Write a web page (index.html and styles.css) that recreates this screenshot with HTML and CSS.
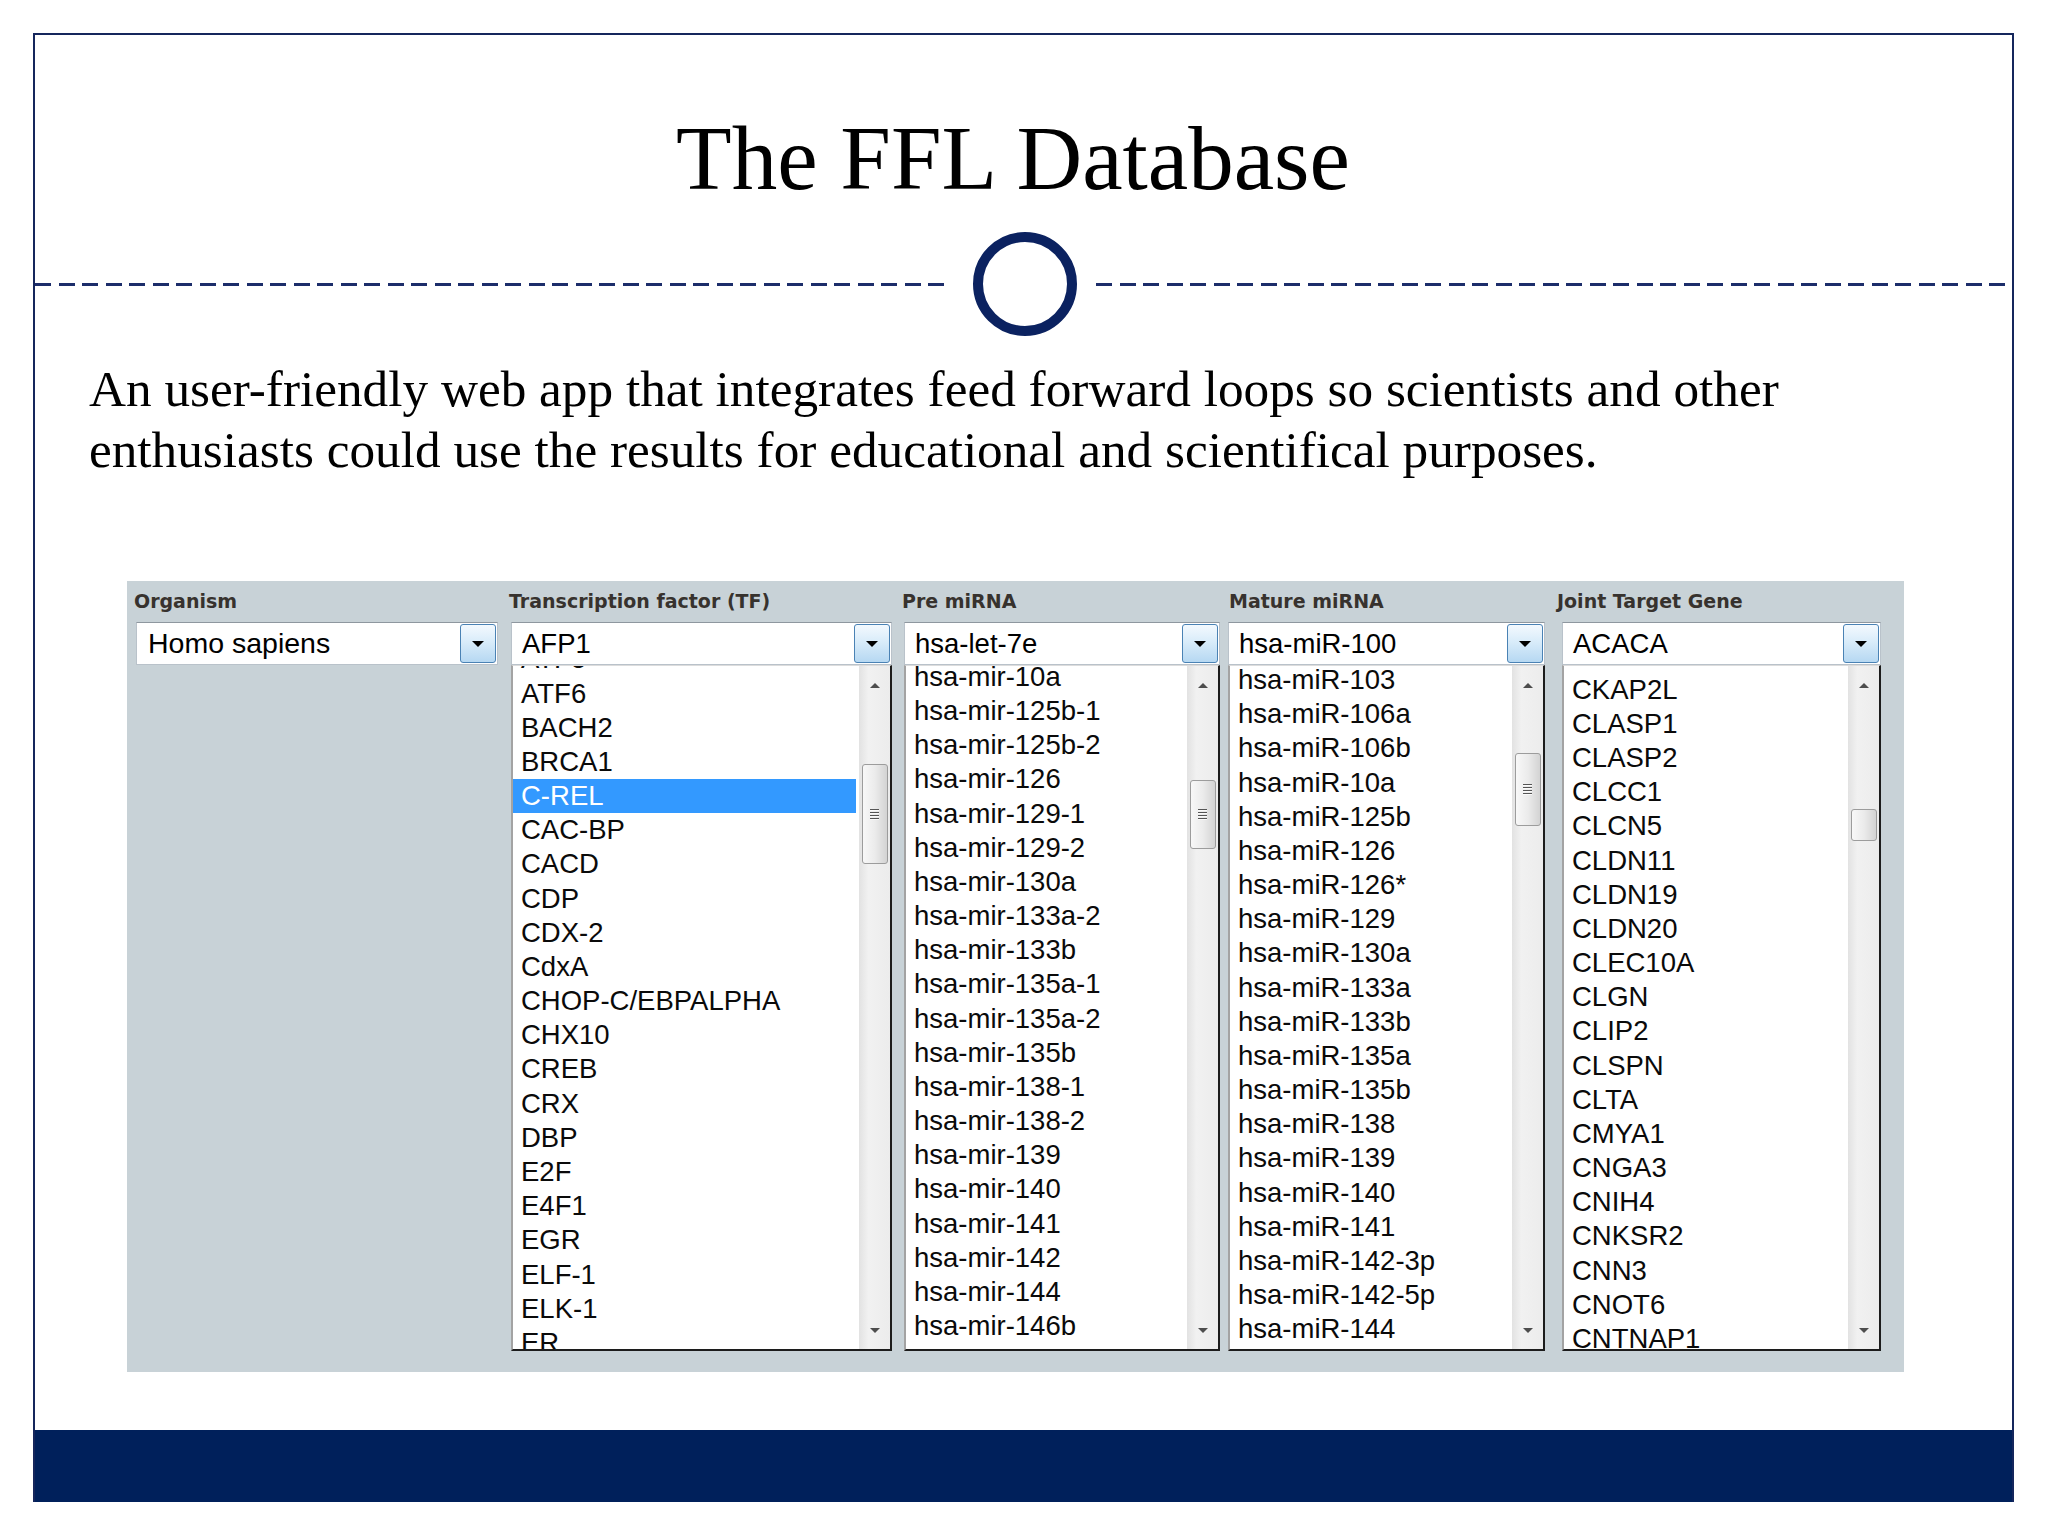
FILE: index.html
```html
<!DOCTYPE html>
<html lang="en">
<head>
<meta charset="utf-8">
<title>The FFL Database</title>
<link rel="stylesheet" href="styles.css">
</head>
<body>
<div class="slide">
  <h1 class="title">The FFL Database</h1>
  <div class="divider">
    <div class="dash left"></div>
    <div class="ring"></div>
    <div class="dash right"></div>
  </div>
  <p class="intro">An user-friendly web app that integrates feed forward loops so scientists and other enthusiasts could use the results for educational and scientifical purposes.</p>

  <div class="panel">
    <div class="field field-org">
      <div class="label">Organism</div>
      <div class="select"><span class="select-value">Homo sapiens</span><span class="drop"></span></div>
    </div>

    <div class="field field-tf">
      <div class="label">Transcription factor (TF)</div>
      <div class="select"><span class="select-value">AFP1</span><span class="drop"></span></div>
      <div class="listbox">
        <div class="items off-tf">
          <ul>
            <li>ATF5</li><li>ATF6</li><li>BACH2</li><li>BRCA1</li><li class="selected">C-REL</li><li>CAC-BP</li><li>CACD</li><li>CDP</li><li>CDX-2</li><li>CdxA</li><li>CHOP-C/EBPALPHA</li><li>CHX10</li><li>CREB</li><li>CRX</li><li>DBP</li><li>E2F</li><li>E4F1</li><li>EGR</li><li>ELF-1</li><li>ELK-1</li><li>ER</li>
          </ul>
        </div>
        <div class="scroll">
          <div class="arrow up"></div>
          <div class="track"><div class="thumb thumb-tf"><span class="grip"></span></div></div>
          <div class="arrow down"></div>
        </div>
      </div>
    </div>

    <div class="field field-pre">
      <div class="label">Pre miRNA</div>
      <div class="select"><span class="select-value">hsa-let-7e</span><span class="drop"></span></div>
      <div class="listbox">
        <div class="items off-pre">
          <ul>
            <li>hsa-mir-10a</li><li>hsa-mir-125b-1</li><li>hsa-mir-125b-2</li><li>hsa-mir-126</li><li>hsa-mir-129-1</li><li>hsa-mir-129-2</li><li>hsa-mir-130a</li><li>hsa-mir-133a-2</li><li>hsa-mir-133b</li><li>hsa-mir-135a-1</li><li>hsa-mir-135a-2</li><li>hsa-mir-135b</li><li>hsa-mir-138-1</li><li>hsa-mir-138-2</li><li>hsa-mir-139</li><li>hsa-mir-140</li><li>hsa-mir-141</li><li>hsa-mir-142</li><li>hsa-mir-144</li><li>hsa-mir-146b</li>
          </ul>
        </div>
        <div class="scroll">
          <div class="arrow up"></div>
          <div class="track"><div class="thumb thumb-pre"><span class="grip"></span></div></div>
          <div class="arrow down"></div>
        </div>
      </div>
    </div>

    <div class="field field-mature">
      <div class="label">Mature miRNA</div>
      <div class="select"><span class="select-value">hsa-miR-100</span><span class="drop"></span></div>
      <div class="listbox">
        <div class="items off-mature">
          <ul>
            <li>hsa-miR-103</li><li>hsa-miR-106a</li><li>hsa-miR-106b</li><li>hsa-miR-10a</li><li>hsa-miR-125b</li><li>hsa-miR-126</li><li>hsa-miR-126*</li><li>hsa-miR-129</li><li>hsa-miR-130a</li><li>hsa-miR-133a</li><li>hsa-miR-133b</li><li>hsa-miR-135a</li><li>hsa-miR-135b</li><li>hsa-miR-138</li><li>hsa-miR-139</li><li>hsa-miR-140</li><li>hsa-miR-141</li><li>hsa-miR-142-3p</li><li>hsa-miR-142-5p</li><li>hsa-miR-144</li>
          </ul>
        </div>
        <div class="scroll">
          <div class="arrow up"></div>
          <div class="track"><div class="thumb thumb-mature"><span class="grip"></span></div></div>
          <div class="arrow down"></div>
        </div>
      </div>
    </div>

    <div class="field field-joint">
      <div class="label">Joint Target Gene</div>
      <div class="select"><span class="select-value">ACACA</span><span class="drop"></span></div>
      <div class="listbox">
        <div class="items off-joint">
          <ul>
            <li>CKAP2L</li><li>CLASP1</li><li>CLASP2</li><li>CLCC1</li><li>CLCN5</li><li>CLDN11</li><li>CLDN19</li><li>CLDN20</li><li>CLEC10A</li><li>CLGN</li><li>CLIP2</li><li>CLSPN</li><li>CLTA</li><li>CMYA1</li><li>CNGA3</li><li>CNIH4</li><li>CNKSR2</li><li>CNN3</li><li>CNOT6</li><li>CNTNAP1</li>
          </ul>
        </div>
        <div class="scroll">
          <div class="arrow up"></div>
          <div class="track"><div class="thumb thumb-joint"></div></div>
          <div class="arrow down"></div>
        </div>
      </div>
    </div>
  </div>

  <div class="footer-bar"></div>
</div>
</body>
</html>
```

FILE: styles.css
```css
html, body {
  margin: 0;
  padding: 0;
  background: #ffffff;
}

body {
  width: 2048px;
  height: 1536px;
  overflow: hidden;
  color: #000;
}

.slide {
  margin: 33px 0 0 33px;
  width: 1981px;
  height: 1469px;
  box-sizing: border-box;
  border: 2px solid #15265c;
  border-bottom: none;
  display: flex;
  flex-direction: column;
}

.title {
  margin: 78px 0 0;
  padding-right: 21px;
  font: normal 91px/91px "Liberation Serif", "Times New Roman", serif;
  text-align: center;
  color: #000;
}

.divider {
  margin-top: 28px;
  height: 104px;
  display: flex;
  align-items: center;
}

.dash {
  flex: 1;
  height: 3px;
  background: repeating-linear-gradient(90deg, #1c2d6a 0 16px, transparent 16px 23.5px);
}

.dash.left { margin-right: 21px; }
.dash.right { margin-left: 19px; }

.ring {
  width: 104px;
  height: 104px;
  box-sizing: border-box;
  border: 10px solid #0b2260;
  border-radius: 50%;
}

.intro {
  margin: 22px 0 0 54px;
  width: 1760px;
  font: normal 51.25px/61px "Liberation Serif", "Times New Roman", serif;
  color: #000;
}

/* ---------- app panel ---------- */

.panel {
  margin: 101px 0 0 92px;
  width: 1777px;
  height: 791px;
  box-sizing: border-box;
  padding: 9px 0 0 9px;
  background: #c8d2d7;
  display: flex;
  align-items: flex-start;
}

.field {
  display: flex;
  flex-direction: column;
}

.field-org { width: 362px; }
.field-tf { width: 381px; margin-left: 13px; }
.field-pre { width: 316px; margin-left: 12px; }
.field-mature { width: 317px; margin-left: 8px; }
.field-joint { width: 319px; margin-left: 17px; }

.label {
  margin: 0 0 10px -2px;
  font: bold 19px/22px "DejaVu Sans", Verdana, sans-serif;
  color: #37322e;
  white-space: nowrap;
}

.field-mature .label { margin-left: 1px; }
.field-joint .label { margin-left: -5px; }

.select {
  height: 43px;
  box-sizing: border-box;
  display: flex;
  align-items: center;
  background: #ffffff;
  border: 1px solid #b9c2ca;
  border-top-color: #8e979f;
}

.select-value {
  flex: 1;
  padding-left: 10px;
  font: 27.5px "Liberation Sans", Arial, sans-serif;
  color: #000;
  white-space: nowrap;
}

.field-org .select-value { padding-left: 11px; font-size: 28.5px; }

.drop {
  width: 36px;
  align-self: stretch;
  margin: 1px;
  box-sizing: border-box;
  border: 1px solid #4a82b4;
  border-radius: 3px;
  background: linear-gradient(#f3f9fe, #d9ecfa 45%, #b6d8f2);
  display: flex;
  align-items: center;
  justify-content: center;
}

.drop::after {
  content: "";
  border-left: 6px solid transparent;
  border-right: 6px solid transparent;
  border-top: 6px solid #000;
}

.listbox {
  height: 686px;
  box-sizing: border-box;
  display: flex;
  background: #ffffff;
  border-top: 1px solid #dcdcdc;
  border-left: 2px solid #a3a3a3;
  border-right: 2px solid #1c1c1c;
  border-bottom: 2px solid #1c1c1c;
}

.items {
  flex: 1;
  overflow: hidden;
  margin-right: 3px;
}

.items ul {
  list-style: none;
  margin: 0;
  padding: 0;
}

.items li {
  padding-left: 8px;
  font: 27.5px/34.17px "Liberation Sans", Arial, sans-serif;
  color: #0a0a0a;
  white-space: nowrap;
}

.items li.selected {
  background: #3399ff;
  color: #ffffff;
}

.off-tf ul { margin-top: -23.6px; }
.off-pre ul { margin-top: -6.2px; }
.off-mature ul { margin-top: -3px; }
.off-joint ul { margin-top: 6.7px; }

.scroll {
  width: 31px;
  display: flex;
  flex-direction: column;
  background: linear-gradient(90deg, #e2e2e2, #f1f1f1 30%, #ececec);
}

.arrow {
  height: 38px;
  display: flex;
  align-items: center;
  justify-content: center;
}

.arrow.up::after {
  content: "";
  border-left: 5px solid transparent;
  border-right: 5px solid transparent;
  border-bottom: 5px solid #4d4d4d;
}

.arrow.down::after {
  content: "";
  border-left: 5px solid transparent;
  border-right: 5px solid transparent;
  border-top: 5px solid #4d4d4d;
}

.track {
  flex: 1;
  display: flex;
  flex-direction: column;
  align-items: center;
}

.thumb {
  width: 26px;
  box-sizing: border-box;
  border: 1px solid #9c9c9c;
  border-radius: 3px;
  background: linear-gradient(90deg, #f8f8f8, #ebebeb 50%, #d3d3d3);
  display: flex;
  align-items: center;
  justify-content: center;
}

.thumb-tf { margin-top: 60px; height: 100px; }
.thumb-pre { margin-top: 76px; height: 69px; }
.thumb-mature { margin-top: 49px; height: 73px; }
.thumb-joint { margin-top: 105px; height: 32px; }

.grip {
  width: 9px;
  height: 11px;
  background: repeating-linear-gradient(#555555 0 1px, #fafafa 1px 2px, transparent 2px 3px);
}

.footer-bar {
  margin-top: auto;
  height: 72px;
  background: #00205b;
}
```
